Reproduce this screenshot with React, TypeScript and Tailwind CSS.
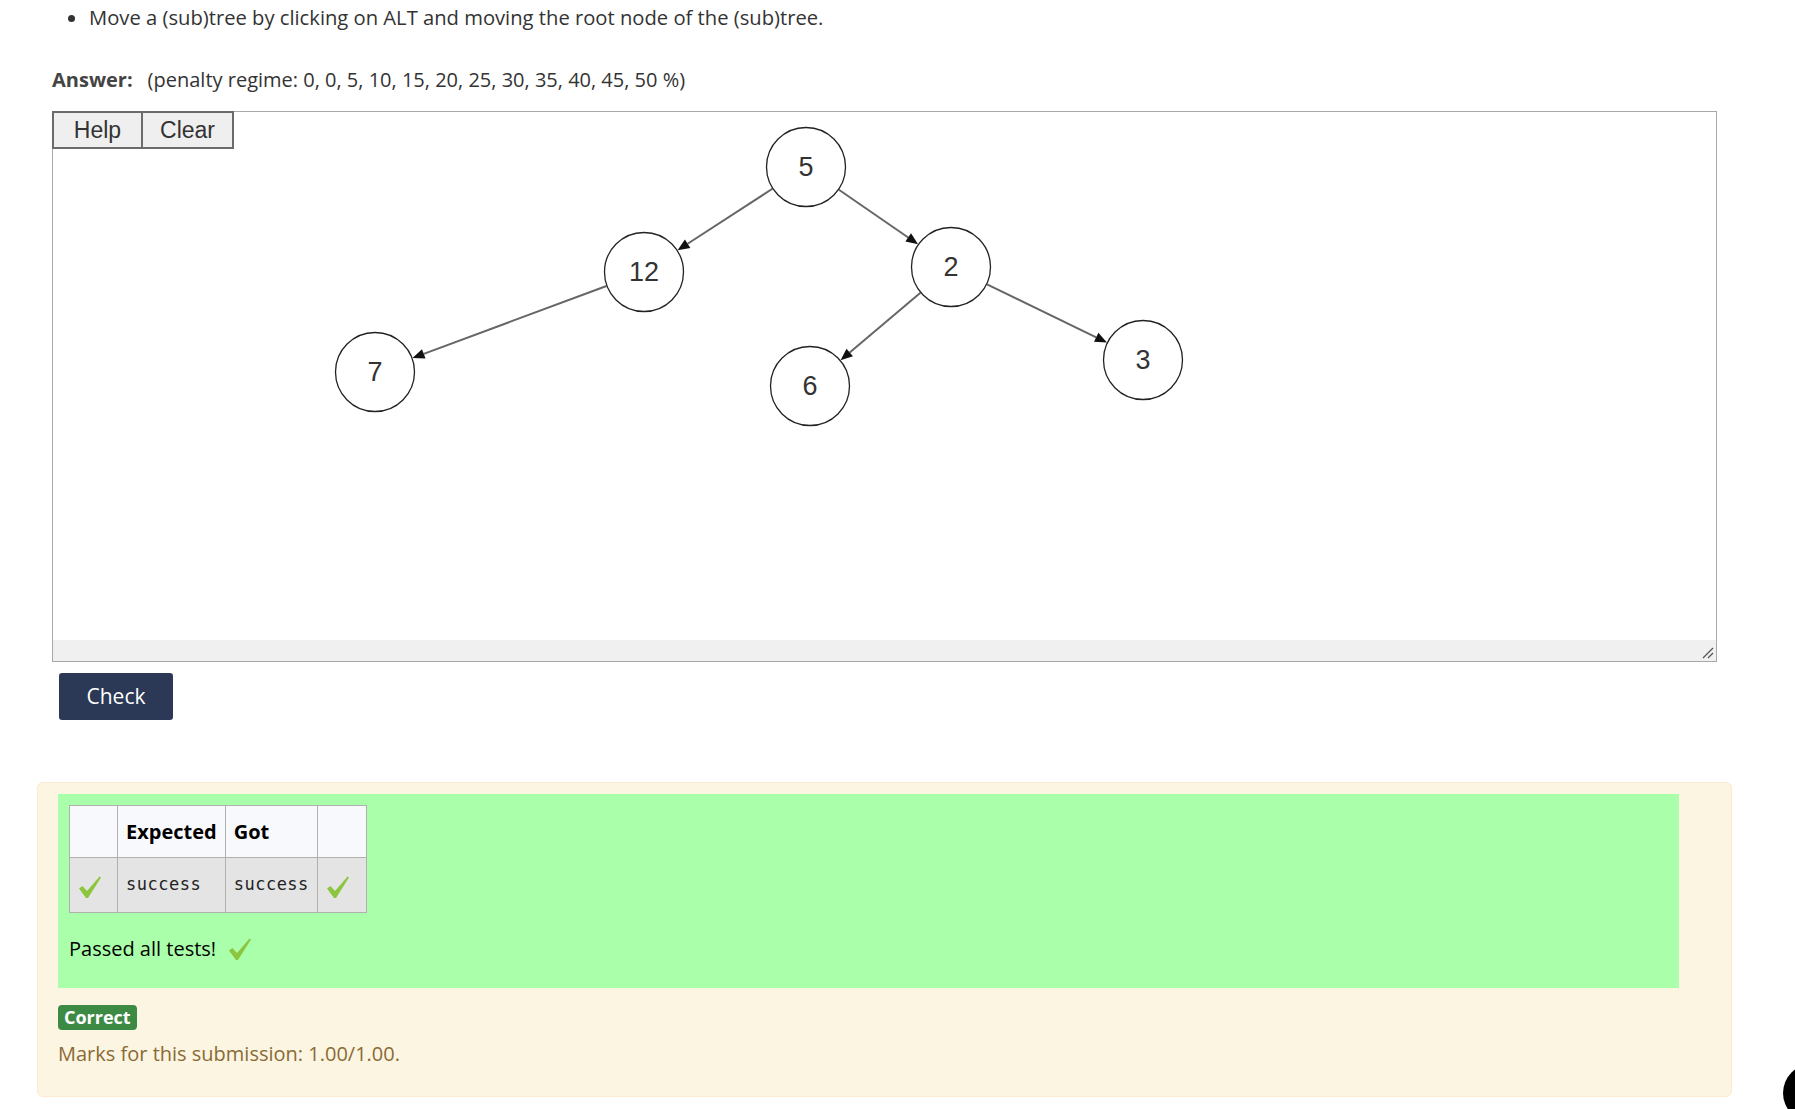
import React from 'react'

const nodes = [
  { id: 'a', label: '5', x: 753, y: 55 },
  { id: 'b', label: '12', x: 591, y: 160 },
  { id: 'c', label: '2', x: 898, y: 155 },
  { id: 'd', label: '7', x: 322, y: 260 },
  { id: 'e', label: '6', x: 757, y: 274 },
  { id: 'f', label: '3', x: 1090, y: 248 },
]

const edges = [
  ['a', 'b'],
  ['a', 'c'],
  ['b', 'd'],
  ['c', 'e'],
  ['c', 'f'],
]

const R = 40

function Tick({ className = '' }: { className?: string }) {
  return (
    <svg viewBox="0 0 24 24" className={className}>
      <path d="M1 13.5 L4.5 11 L9 16 L21.5 1.5 L23 2.5 L10 23 L8 23 Z" fill="#8cc63f" />
    </svg>
  )
}

function TreeCanvas() {
  const byId = Object.fromEntries(nodes.map((n) => [n.id, n]))
  return (
    <svg width="1663" height="528" className="absolute left-0 top-0">
      {edges.map(([f, t]) => {
        const a = byId[f]
        const b = byId[t]
        const dx = b.x - a.x
        const dy = b.y - a.y
        const len = Math.hypot(dx, dy)
        const ux = dx / len
        const uy = dy / len
        const x1 = a.x + ux * R
        const y1 = a.y + uy * R
        const x2 = b.x - ux * R
        const y2 = b.y - uy * R
        const hx = x2 - ux * 12
        const hy = y2 - uy * 12
        const px = -uy * 5
        const py = ux * 5
        return (
          <g key={f + t}>
            <line x1={x1} y1={y1} x2={hx} y2={hy} stroke="#666" strokeWidth="2" />
            <polygon points={`${x2},${y2} ${hx + px},${hy + py} ${hx - px},${hy - py}`} fill="#111" />
          </g>
        )
      })}
      {nodes.map((n) => (
        <g key={n.id}>
          <circle cx={n.x} cy={n.y} r={R - 0.5} fill="white" stroke="#222" strokeWidth="1.3" />
          <text
            x={n.x}
            y={n.y + 9}
            textAnchor="middle"
            fontSize="27"
            fill="#333"
            fontFamily="'Liberation Sans', Arial, sans-serif"
          >
            {n.label}
          </text>
        </g>
      ))}
    </svg>
  )
}

export default function App() {
  return (
    <div className="relative w-full h-[1109px] overflow-hidden bg-white font-['Open_Sans',sans-serif] text-[#333]">
      <ul className="pl-[89px] pt-[2px] text-[20.2px] leading-[30px] list-disc">
        <li>Move a (sub)tree by clicking on ALT and moving the root node of the (sub)tree.</li>
      </ul>

      <div className="pl-[52px] mt-[33px] flex items-center gap-[15px] text-[20px] leading-[30px]">
        <span className="font-bold text-[#444]">Answer:</span>
        <span>(penalty regime: 0, 0, 5, 10, 15, 20, 25, 30, 35, 40, 45, 50 %)</span>
      </div>

      <div className="ml-[52px] mt-[16px] w-[1665px] h-[551px] border border-[#a9a9a9] relative flex flex-col">
        <div className="relative flex-1">
          <TreeCanvas />
          <div className="absolute -left-px -top-px flex font-['Liberation_Sans',Arial,sans-serif] text-[23px] text-[#333]">
            <button className="w-[91px] h-[38px] bg-[#efefef] border-2 border-[#6b6b6b]">Help</button>
            <button className="w-[91px] h-[38px] bg-[#efefef] border-2 border-l-0 border-[#6b6b6b]">Clear</button>
          </div>
        </div>
        <div className="h-[21px] bg-[#f0f0f0] relative">
          <svg width="12" height="12" className="absolute right-[2px] bottom-[2px]">
            <line x1="11" y1="1" x2="1" y2="11" stroke="#555" strokeWidth="1.3" />
            <line x1="11" y1="6" x2="6" y2="11" stroke="#555" strokeWidth="1.3" />
          </svg>
        </div>
      </div>

      <button className="ml-[59px] mt-[11px] w-[114px] h-[47px] rounded-[3px] bg-[#2b3856] text-white text-[21px]">
        Check
      </button>

      <div className="ml-[37px] mt-[62px] w-[1695px] h-[315px] rounded-[6px] border border-[#fbeacf] bg-[#fcf5e2] pt-[11px] pl-[20px]">
        <div className="w-[1621px] h-[194px] bg-[#aaffaa] pt-[11px] pl-[11px]">
          <table className="border-collapse text-black">
            <thead>
              <tr className="bg-[#f8f9fd] h-[52px]">
                <th className="w-[48px] border border-[#b0b0b0]"></th>
                <th className="w-[106px] border border-[#b0b0b0] text-left px-[8px] text-[20px] font-bold">Expected</th>
                <th className="w-[90px] border border-[#b0b0b0] text-left px-[8px] text-[20px] font-bold">Got</th>
                <th className="w-[49px] border border-[#b0b0b0]"></th>
              </tr>
            </thead>
            <tbody>
              <tr className="bg-[#e4e4e4] h-[55px]">
                <td className="border border-[#b0b0b0] px-[8px] align-middle">
                  <Tick className="w-[24px] h-[24px] mt-[4px]" />
                </td>
                <td className="border border-[#b0b0b0] px-[8px] align-middle font-['DejaVu_Sans_Mono',monospace] text-[17px] tracking-[0.5px] text-[#222]">
                  success
                </td>
                <td className="border border-[#b0b0b0] px-[8px] align-middle font-['DejaVu_Sans_Mono',monospace] text-[17px] tracking-[0.5px] text-[#222]">
                  success
                </td>
                <td className="border border-[#b0b0b0] px-[8px] align-middle">
                  <Tick className="w-[24px] h-[24px] mt-[4px]" />
                </td>
              </tr>
            </tbody>
          </table>
          <div className="mt-[21px] flex items-center gap-[12px] text-[20px] text-black">
            <span>Passed all tests!</span>
            <Tick className="w-[24px] h-[24px]" />
          </div>
        </div>
        <div className="mt-[17px] inline-block rounded-[4px] bg-[#3d8a45] px-[6px] h-[25px] leading-[25px] text-white font-bold text-[18px]">
          Correct
        </div>
        <div className="mt-[9px] text-[20px] text-[#8a6a35]">Marks for this submission: 1.00/1.00.</div>
      </div>

      <div className="absolute left-[1783px] top-[1064px] w-[58px] h-[58px] rounded-full bg-black"></div>
    </div>
  )
}
